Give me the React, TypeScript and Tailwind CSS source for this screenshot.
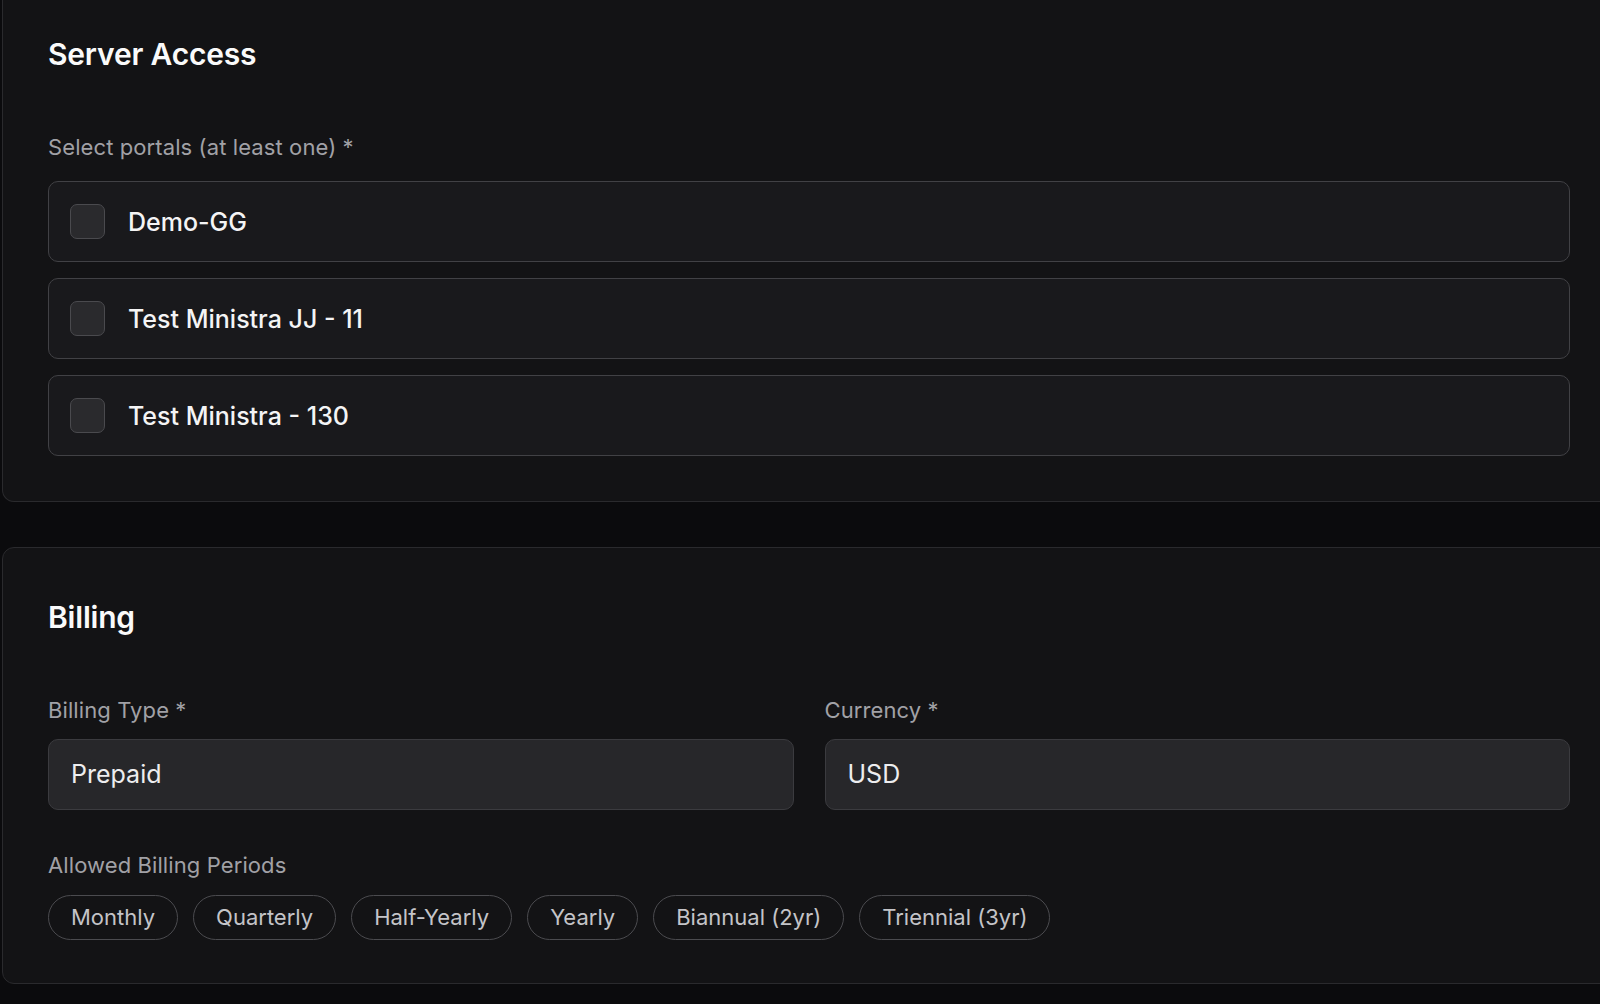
import { useState } from "react";

const portals = ["Demo-GG", "Test Ministra JJ - 11", "Test Ministra - 130"];
const periods = ["Monthly", "Quarterly", "Half-Yearly", "Yearly", "Biannual (2yr)", "Triennial (3yr)"];

export default function App() {
  const [checked, setChecked] = useState<Record<string, boolean>>({});

  return (
    <div
      className="w-[1600px] h-[1004px] overflow-hidden bg-[#0b0b0d] text-white"
      style={{ fontFamily: "Inter, 'Noto Sans', sans-serif" }}
    >
      {/* Server Access */}
      <section className="ml-[2px] w-[1614px] bg-[#131315] border-x border-b border-[#2a2a2d] rounded-b-[12px] pt-[35px] pb-[45px] px-[45px]">
        <h2 className="text-[30px] leading-[38px] font-semibold tracking-[-0.2px] text-[#fafafa]">Server Access</h2>
        <p className="mt-[60px] text-[22px] leading-[28px] tracking-[0.1px] text-[#a1a1a6]">Select portals (at least one) *</p>
        <div className="mt-[20px] flex flex-col gap-[16px]">
          {portals.map((p) => (
            <label
              key={p}
              className="h-[81px] flex items-center gap-[23px] pl-[21px] rounded-[10px] border border-[#414145] bg-[#19191c] cursor-pointer"
            >
              <input
                type="checkbox"
                className="hidden"
                checked={!!checked[p]}
                onChange={() => setChecked({ ...checked, [p]: !checked[p] })}
              />
              <span className="w-[35px] h-[35px] rounded-[7px] border border-[#4a4a4e] bg-[#2a2a2d]" />
              <span className="text-[25px] leading-[32px] font-medium text-[#f4f4f5]">{p}</span>
            </label>
          ))}
        </div>
      </section>

      {/* Billing */}
      <section className="mt-[45px] ml-[2px] w-[1614px] bg-[#131315] border border-[#2a2a2d] rounded-[12px] pt-[50px] pb-[43px] px-[45px]">
        <h2 className="text-[30px] leading-[38px] font-semibold tracking-[-0.2px] text-[#fafafa]">Billing</h2>
        <div className="mt-[60px] grid grid-cols-2 gap-x-[31px]">
          <div>
            <p className="text-[22px] leading-[28px] tracking-[0.1px] text-[#a1a1a6]">Billing Type *</p>
            <div className="mt-[15px] h-[71px] flex items-center px-[22px] rounded-[10px] border border-[#3b3b3f] bg-[#27272a] text-[25px] text-[#ededef]">
              Prepaid
            </div>
          </div>
          <div>
            <p className="text-[22px] leading-[28px] tracking-[0.1px] text-[#a1a1a6]">Currency *</p>
            <div className="mt-[15px] h-[71px] flex items-center px-[22px] rounded-[10px] border border-[#3b3b3f] bg-[#27272a] text-[25px] text-[#ededef]">
              USD
            </div>
          </div>
        </div>
        <p className="mt-[41px] text-[22px] leading-[28px] tracking-[0.1px] text-[#a1a1a6]">Allowed Billing Periods</p>
        <div className="mt-[16px] flex gap-[15px]">
          {periods.map((p) => (
            <button
              key={p}
              className="h-[45px] px-[22px] rounded-full border border-[#4b4b4f] text-[22px] text-[#c4c4c8]"
            >
              {p}
            </button>
          ))}
        </div>
      </section>
    </div>
  );
}
